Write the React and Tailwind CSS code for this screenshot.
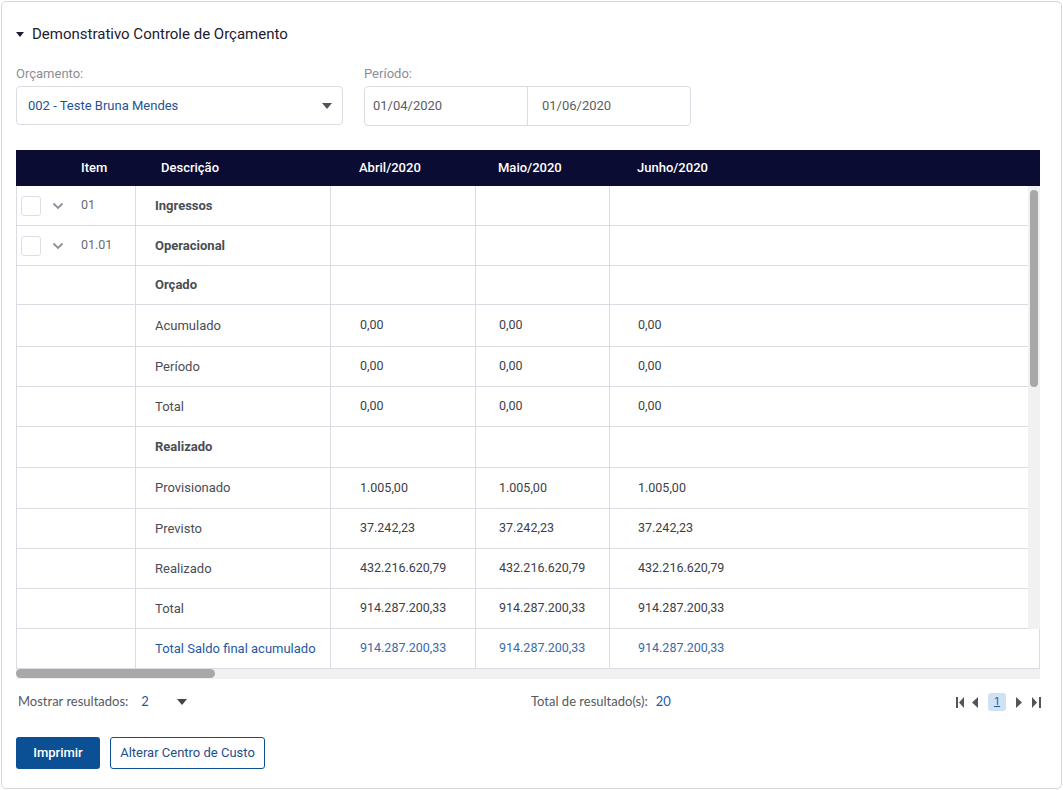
import React from "react";

const cols = [
  { w: "w-[119px]" },
  { w: "w-[195px]", pad: "pl-[19px]" },
  { w: "w-[145px]", pad: "pl-[29px]" },
  { w: "w-[134px]", pad: "pl-[23px]" },
  { w: "flex-1", pad: "pl-[28px]" },
];

const rows = [
  { item: "01", check: true, desc: "Ingressos", bold: true, h: "h-[40px]" },
  { item: "01.01", check: true, desc: "Operacional", bold: true, h: "h-[40px]" },
  { desc: "Orçado", bold: true, h: "h-[39px]" },
  { desc: "Acumulado", vals: ["0,00", "0,00", "0,00"], h: "h-[42px]" },
  { desc: "Período", vals: ["0,00", "0,00", "0,00"], h: "h-[40px]" },
  { desc: "Total", vals: ["0,00", "0,00", "0,00"], h: "h-[40px]" },
  { desc: "Realizado", bold: true, h: "h-[41px]" },
  { desc: "Provisionado", vals: ["1.005,00", "1.005,00", "1.005,00"], h: "h-[41px]" },
  { desc: "Previsto", vals: ["37.242,23", "37.242,23", "37.242,23"], h: "h-[40px]" },
  { desc: "Realizado", vals: ["432.216.620,79", "432.216.620,79", "432.216.620,79"], h: "h-[40px]" },
  { desc: "Total", vals: ["914.287.200,33", "914.287.200,33", "914.287.200,33"], h: "h-[40px]" },
];

const Chevron = () => (
  <svg width="12" height="8" viewBox="0 0 12 8" className="text-[#8a8f99]">
    <path d="M1.5 1.5 L6 6 L10.5 1.5" fill="none" stroke="currentColor" strokeWidth="1.8" />
  </svg>
);

const Caret = ({ className }) => (
  <svg width="10" height="6" viewBox="0 0 10 6" className={className}>
    <path d="M0 0 L10 0 L5 6 Z" fill="currentColor" />
  </svg>
);

const Row = ({ r, last }) => (
  <div className={`flex ${r.h} border-b border-[#d9dce3]`}>
    <div className={`${cols[0].w} flex items-center border-r border-[#d9dce3] text-[12.5px]`}>
      {r.check && (
        <>
          <span className="ml-[4px] h-[20px] w-[20px] rounded-[3px] border border-[#dcdfe5] bg-white" />
          <span className="ml-[11px] flex items-center"><Chevron /></span>
          <span className="ml-[17px] text-[#666b75]">{r.item}</span>
        </>
      )}
    </div>
    <div className={`${cols[1].w} ${cols[1].pad} flex items-center border-r border-[#d9dce3] text-[13px] ${last ? "text-[#1f5aa0]" : "text-[#4a4d55]"} ${r.bold ? "font-bold" : ""}`}>
      {r.desc}
    </div>
    {[2, 3, 4].map((c) => (
      <div
        key={c}
        className={`${cols[c].w} ${cols[c].pad} flex items-center text-[12.5px] ${c < 4 ? "border-r border-[#d9dce3]" : ""} ${last ? "text-[#3a6aa8]" : "text-[#3d4048]"}`}
      >
        {r.vals ? r.vals[c - 2] : ""}
      </div>
    ))}
  </div>
);

const PageBtn = ({ children }) => (
  <span className="flex items-center text-[#555]">{children}</span>
);

export default function App() {
  return (
    <div className="min-h-[790px] bg-white p-[1px] font-['Roboto',sans-serif]">
      <div className="h-[788px] rounded-[5px] border border-[#d3d7de] bg-white pl-[14px] pr-[20px]">
        <div className="flex items-center pt-[21px] text-[15px] text-[#1d2030]">
          <Caret className="mr-[8px] w-[8px] h-[5px] text-[#1d2030]" />
          <span>Demonstrativo Controle de Orçamento</span>
        </div>

        <div className="mt-[18px] flex gap-[21px]">
          <div className="flex flex-col">
            <span className="text-[13px] text-[#8b8e95]">Orçamento:</span>
            <div className="mt-[3px] flex h-[39px] w-[327px] items-center justify-between rounded-[4px] border border-[#d9dce3] pl-[11px] pr-[10px] text-[13px] text-[#1c5497]">
              <span>002 - Teste Bruna Mendes</span>
              <Caret className="text-[#555]" />
            </div>
          </div>
          <div className="flex flex-col">
            <span className="text-[13px] text-[#8b8e95]">Período:</span>
            <div className="mt-[3px] flex h-[40px] w-[327px] rounded-[4px] border border-[#d9dce3] text-[13px] text-[#5a5d65]">
              <div className="flex w-[163px] items-center border-r border-[#d9dce3] pl-[8px]">01/04/2020</div>
              <div className="flex flex-1 items-center pl-[14px]">01/06/2020</div>
            </div>
          </div>
        </div>

        <div className="mt-[24px] w-[1024px]">
          <div className="flex h-[36px] items-center bg-[#0b0c33] text-[13px] font-medium text-white">
            <span className="w-[65px]" />
            <span className="w-[80px]">Item</span>
            <span className="w-[198px]">Descrição</span>
            <span className="w-[139px]">Abril/2020</span>
            <span className="w-[139px]">Maio/2020</span>
            <span>Junho/2020</span>
          </div>
          <div className="flex">
            <div className="w-[1012px] border-l border-[#d9dce3]">
              {rows.map((r, i) => (
                <Row key={i} r={r} />
              ))}
            </div>
            <div className="w-[12px] bg-[#f1f1f1] px-[2px] pt-[4px]">
              <div className="h-[197px] rounded-[4px] bg-[#a8a8a8]" />
            </div>
          </div>
          <div className="border-l border-r border-[#d9dce3]">
            <Row
              r={{ desc: "Total Saldo final acumulado", vals: ["914.287.200,33", "914.287.200,33", "914.287.200,33"], h: "h-[40px]" }}
              last
            />
          </div>
          <div className="h-[10px] bg-[#f1f1f1]">
            <div className="h-[9px] w-[199px] rounded-[5px] bg-[#a8a8a8]" />
          </div>
        </div>

        <div className="mt-[13px] flex h-[20px] w-[1025px] items-center font-['Lato',sans-serif] text-[13px] text-[#555a60]">
          <div className="flex w-[515px] items-center pl-[2px]">
            <span>Mostrar resultados:</span>
            <span className="ml-[13px] text-[#1f5aa0]">2</span>
            <Caret className="ml-[28px] text-[#444]" />
          </div>
          <div className="flex flex-1 items-center">
            <span>Total de resultado(s):</span>
            <span className="ml-[8px] text-[#1f5aa0]">20</span>
          </div>
          <div className="flex items-center">
            <PageBtn>
              <svg width="9" height="11" viewBox="0 0 9 11"><rect x="0" y="0" width="2" height="11" fill="currentColor" /><path d="M8 0 L8 11 L3 5.5 Z" fill="currentColor" /></svg>
            </PageBtn>
            <span className="ml-[6px]">
              <PageBtn>
                <svg width="7" height="11" viewBox="0 0 7 11"><path d="M7 0 L7 11 L1 5.5 Z" fill="currentColor" /></svg>
              </PageBtn>
            </span>
            <span className="ml-[10px] flex h-[18px] w-[18px] items-center justify-center rounded-[3px] bg-[#cfe2f5] font-['Roboto',sans-serif] text-[11px] text-[#1f5aa0] underline">1</span>
            <span className="ml-[10px]">
              <PageBtn>
                <svg width="7" height="11" viewBox="0 0 7 11"><path d="M0 0 L0 11 L6 5.5 Z" fill="currentColor" /></svg>
              </PageBtn>
            </span>
            <span className="ml-[9px]">
              <PageBtn>
                <svg width="9" height="11" viewBox="0 0 9 11"><path d="M0 0 L0 11 L5 5.5 Z" fill="currentColor" /><rect x="7" y="0" width="2" height="11" fill="currentColor" /></svg>
              </PageBtn>
            </span>
          </div>
        </div>

        <div className="mt-[25px] flex gap-[10px]">
          <button className="h-[32px] w-[84px] rounded-[3px] bg-[#0b4f94] text-[13px] font-medium text-white">Imprimir</button>
          <button className="h-[32px] w-[155px] rounded-[3px] border border-[#0b4f94] bg-white text-[13px] text-[#1c4f8a]">Alterar Centro de Custo</button>
        </div>
      </div>
    </div>
  );
}
